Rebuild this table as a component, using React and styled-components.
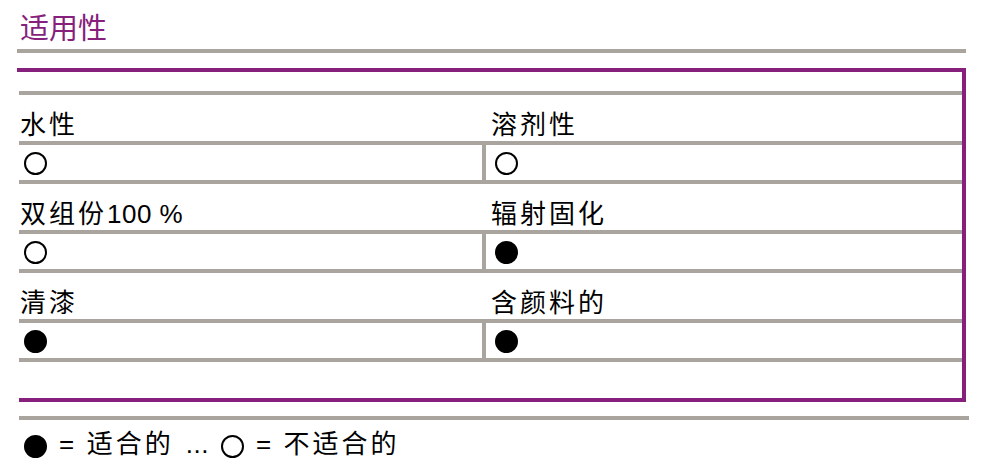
import styled, { createGlobalStyle } from "styled-components";

const purple = "#871f7c";
const grey = "#a9a49e";

const GlobalStyle = createGlobalStyle`
  body {
    margin: 0;
    background: #fff;
    color: #000;
    font-family: "Liberation Sans", "Noto Sans CJK SC", sans-serif;
  }
`;

const Page = styled.div`
  width: 981px;
  height: 473px;
  padding-left: 17px;
  box-sizing: border-box;
  overflow: hidden;
`;

const Heading = styled.h1`
  margin: 0;
  width: 949px;
  box-sizing: border-box;
  padding: 15px 0 5px 3px;
  font-size: 29px;
  line-height: 29px;
  font-weight: normal;
  color: ${purple};
  border-bottom: 4px solid ${grey};
`;

const Panel = styled.div`
  margin-top: 15px;
  width: 949px;
  box-sizing: border-box;
  border-top: 4px solid ${purple};
  border-right: 4px solid ${purple};
`;

const PanelBody = styled.div`
  margin-left: 2px;
  padding: 19px 0 36px;
  border-bottom: 4px solid ${purple};
`;

const Table = styled.div`
  border-top: 4px solid ${grey};
`;

const Row = styled.div`
  display: grid;
  grid-template-columns: 463px 1fr;
  height: ${(p) => p.$h}px;
  border-bottom: 4px solid ${grey};
`;

const LabelCell = styled.div`
  display: flex;
  align-items: flex-end;
  padding: 0 0 3px ${(p) => (p.$right ? 9 : 1)}px;
  font-size: 26px;
  line-height: 26px;
  letter-spacing: 3px;
  white-space: nowrap;
`;

const Latin = styled.span`
  letter-spacing: 0.5px;
`;

const ValueCell = styled.div`
  display: flex;
  align-items: center;
  padding: 2px 0 0 ${(p) => (p.$right ? 5 : 1)}px;
  border-left: ${(p) => (p.$right ? `4px solid ${grey}` : "none")};
`;

const Dot = styled.span`
  display: inline-block;
  flex: none;
  width: 23px;
  height: 23px;
  box-sizing: border-box;
  border-radius: 50%;
  border: 2px solid #000;
  background: ${(p) => (p.$filled ? "#000" : "transparent")};
  margin-left: ${(p) => p.$ml || 0}px;
  margin-top: ${(p) => p.$mt || 0}px;
`;

const Legend = styled.div`
  margin: 14px 0 0 2px;
  width: 945px;
  border-top: 4px solid ${grey};
  padding: 10px 0 0 5px;
  display: flex;
  align-items: center;
  gap: 12px;
  font-size: 26px;
  line-height: 26px;
  letter-spacing: 3px;
  white-space: nowrap;
`;

const rows = [
  { left: "水性", right: "溶剂性", l: false, r: false },
  { left: "双组份100 %", right: "辐射固化", l: false, r: true },
  { left: "清漆", right: "含颜料的", l: true, r: true },
];

// ASCII runs get tighter tracking than the CJK characters
const label = (text) =>
  text
    .split(/([\x20-\x7e]+)/)
    .filter(Boolean)
    .map((part, i) =>
      /^[\x20-\x7e]+$/.test(part) ? <Latin key={i}>{part}</Latin> : part
    );

export default function App() {
  return (
    <Page>
      <GlobalStyle />
      <Heading>适用性</Heading>
      <Panel>
        <PanelBody>
          <Table>
            {rows.map((row) => (
              <div key={row.left}>
                <Row $h={46}>
                  <LabelCell>{label(row.left)}</LabelCell>
                  <LabelCell $right>{label(row.right)}</LabelCell>
                </Row>
                <Row $h={35}>
                  <ValueCell>
                    <Dot $filled={row.l} $ml={4} />
                  </ValueCell>
                  <ValueCell $right>
                    <Dot $filled={row.r} $ml={4} />
                  </ValueCell>
                </Row>
              </div>
            ))}
          </Table>
        </PanelBody>
      </Panel>
      <Legend>
        <Dot $filled $mt={5} />
        <Latin>=</Latin>
        <span>适合的</span>
        <Latin>...</Latin>
        <Dot $mt={5} />
        <Latin>=</Latin>
        <span>不适合的</span>
      </Legend>
    </Page>
  );
}
